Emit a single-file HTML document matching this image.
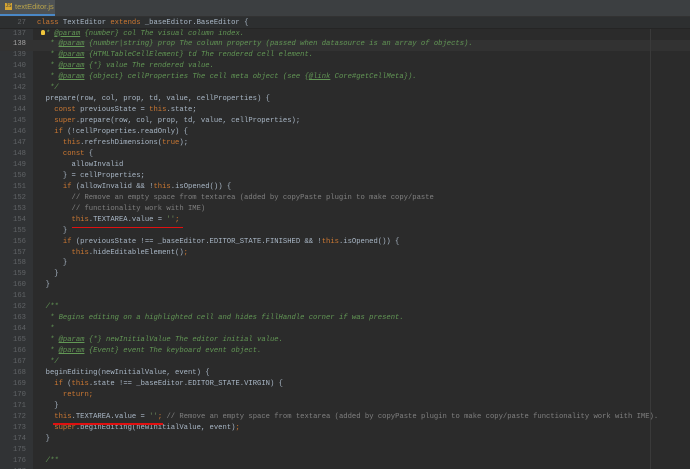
<!DOCTYPE html>
<html><head><meta charset="utf-8"><style>
html,body{margin:0;padding:0;width:690px;height:469px;overflow:hidden;background:#2b2b2b;}
body{position:relative;font-family:"Liberation Mono","DejaVu Sans Mono",monospace;font-size:7.2px;}
.tabbar{position:absolute;left:0;top:0;width:690px;height:16px;background:#3c3f41;border-bottom:1px solid #323232;}
.tab{position:absolute;left:0;top:0;width:55px;height:14px;background:#4e5254;border-bottom:2px solid #4a88c7;}
.tab .ic{position:absolute;left:5px;top:3px;width:7px;height:7px;background:#d5a533;color:#3c3f41;font-size:5px;line-height:7px;text-align:center;font-family:"Liberation Sans",sans-serif;}
.tab .t{position:absolute;left:15px;top:2px;color:#b9a34a;font-family:"Liberation Sans",sans-serif;font-size:7.5px;line-height:10px;}
.gutter{position:absolute;left:0;top:17px;width:33px;height:452px;background:#313335;}
.sticky{position:absolute;left:0;top:17px;width:690px;height:11px;background:#2d2f30;border-bottom:1px solid #252525;}
.hl{position:absolute;left:0;width:690px;height:11px;background:#323232;}
.margin{position:absolute;left:650px;top:29px;width:1px;height:440px;background:#3a3a3a;}
.ln{position:absolute;left:0;width:26px;text-align:right;color:#606366;white-space:pre;line-height:11px;}
.cd{position:absolute;left:37px;color:#a9b7c6;white-space:pre;line-height:11px;}
.k{color:#cc7832}.c{color:#808080}.d{color:#629755;font-style:italic}.dt{color:#629755;font-style:italic;text-decoration:underline}
.s{color:#6a8759}
.red{position:absolute;height:1.5px;background:#e01010;}
.bulb{position:absolute;left:41px;top:30px;width:4px;height:5px;border-radius:2px 2px 1px 1px;background:#f0c63c;}
</style></head><body>
<div class="tabbar"><div class="tab"><div class="ic">JS</div><div class="t">textEditor.js</div></div></div>
<div class="gutter"></div>
<div class="sticky"></div>
<div class="hl" style="top:39.5px"></div>
<div class="margin"></div>
<div class="bulb"></div>
<div class="ln" style="top:17.5px">27</div>
<div class="cd" style="top:17.5px"><span class="k">class</span> TextEditor <span class="k">extends</span> _baseEditor.BaseEditor {</div>
<div id="code"></div>
<script>
var L=[
[137,'  <span class="d">* </span><span class="dt">@param</span><span class="d"> {number} col The visual column index.</span>'],
[138,'   <span class="d">* </span><span class="dt">@param</span><span class="d"> {number|string} prop The column property (passed when datasource is an array of objects).</span>'],
[139,'   <span class="d">* </span><span class="dt">@param</span><span class="d"> {HTMLTableCellElement} td The rendered cell element.</span>'],
[140,'   <span class="d">* </span><span class="dt">@param</span><span class="d"> {*} value The rendered value.</span>'],
[141,'   <span class="d">* </span><span class="dt">@param</span><span class="d"> {object} cellProperties The cell meta object (see {</span><span class="dt">@link</span><span class="d"> Core#getCellMeta}).</span>'],
[142,'   <span class="d">*/</span>'],
[143,'  prepare(row, col, prop, td, value, cellProperties) {'],
[144,'    <span class="k">const</span> previousState = <span class="k">this</span>.state;'],
[145,'    <span class="k">super</span>.prepare(row, col, prop, td, value, cellProperties);'],
[146,'    <span class="k">if</span> (!cellProperties.readOnly) {'],
[147,'      <span class="k">this</span>.refreshDimensions(<span class="k">true</span>);'],
[148,'      <span class="k">const</span> {'],
[149,'        allowInvalid'],
[150,'      } = cellProperties;'],
[151,'      <span class="k">if</span> (allowInvalid &amp;&amp; !<span class="k">this</span>.isOpened()) {'],
[152,'        <span class="c">// Remove an empty space from textarea (added by copyPaste plugin to make copy/paste</span>'],
[153,'        <span class="c">// functionality work with IME)</span>'],
[154,'        <span class="k">this</span>.TEXTAREA.value = <span class="s">\'\'</span><span class="k">;</span>'],
[155,'      }'],
[156,'      <span class="k">if</span> (previousState !== _baseEditor.EDITOR_STATE.FINISHED &amp;&amp; !<span class="k">this</span>.isOpened()) {'],
[157,'        <span class="k">this</span>.hideEditableElement()<span class="k">;</span>'],
[158,'      }'],
[159,'    }'],
[160,'  }'],
[161,''],
[162,'  <span class="d">/**</span>'],
[163,'   <span class="d">* Begins editing on a highlighted cell and hides fillHandle corner if was present.</span>'],
[164,'   <span class="d">*</span>'],
[165,'   <span class="d">* </span><span class="dt">@param</span><span class="d"> {*} newInitialValue The editor initial value.</span>'],
[166,'   <span class="d">* </span><span class="dt">@param</span><span class="d"> {Event} event The keyboard event object.</span>'],
[167,'   <span class="d">*/</span>'],
[168,'  beginEditing(newInitialValue, event) {'],
[169,'    <span class="k">if</span> (<span class="k">this</span>.state !== _baseEditor.EDITOR_STATE.VIRGIN) {'],
[170,'      <span class="k">return;</span>'],
[171,'    }'],
[172,'    <span class="k">this</span>.TEXTAREA.value = <span class="s">\'\'</span><span class="k">;</span> <span class="c">// Remove an empty space from textarea (added by copyPaste plugin to make copy/paste functionality work with IME).</span>'],
[173,'    <span class="k">super</span>.beginEditing(newInitialValue, event)<span class="k">;</span>'],
[174,'  }'],
[175,''],
[176,'  <span class="d">/**</span>'],
[177,'']
];
var h='';
for(var i=0;i<L.length;i++){var t=28.5+i*10.95;
h+='<div class="ln" style="top:'+t+'px'+(L[i][0]==138?';color:#a4a3a3':'')+'">'+L[i][0]+'</div><div class="cd" style="top:'+t+'px">'+L[i][1]+'</div>';}
document.getElementById('code').innerHTML=h;
</script>
<div class="red" style="left:72px;top:226.5px;width:111px"></div>
<div class="red" style="left:53px;top:423px;width:110px"></div>
</body></html>
